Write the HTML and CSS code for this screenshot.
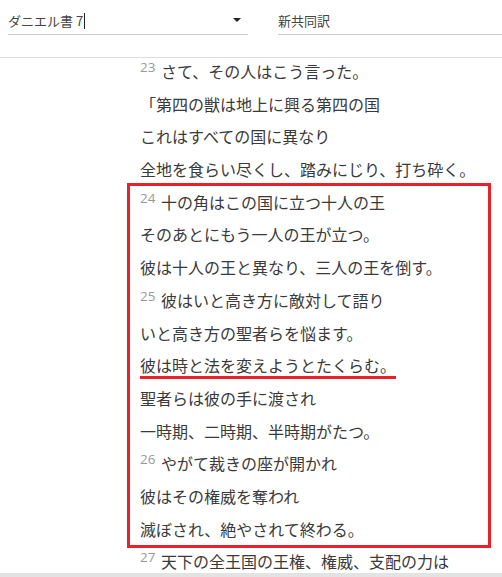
FILE: index.html
```html
<!DOCTYPE html>
<html lang="ja">
<head>
    <meta charset="UTF-8">
    <meta name="viewport" content="width=device-width, initial-scale=1.0">
    <title>ダニエル書 7 | 新共同訳</title>
    <link rel="stylesheet" href="styles.css">
</head>
<body>
    <header class="toolbar">
        <div class="field book-field">
            <span class="field-value">ダニエル書 7<span class="caret"></span></span>
            <span class="arrow"></span>
        </div>
        <div class="field version-field">
            <span class="field-value">新共同訳</span>
        </div>
    </header>

    <main class="reader">
        <div class="passage">
            <p class="line"><sup class="vnum">23</sup> さて、その人はこう言った。</p>
            <p class="line">「第四の獣は地上に興る第四の国</p>
            <p class="line">これはすべての国に異なり</p>
            <p class="line">全地を食らい尽くし、踏みにじり、打ち砕く。</p>
            <div class="highlight">
                <p class="line"><sup class="vnum">24</sup> 十の角はこの国に立つ十人の王</p>
                <p class="line">そのあとにもう一人の王が立つ。</p>
                <p class="line">彼は十人の王と異なり、三人の王を倒す。</p>
                <p class="line"><sup class="vnum">25</sup> 彼はいと高き方に敵対して語り</p>
                <p class="line">いと高き方の聖者らを悩ます。</p>
                <p class="line"><span class="underline">彼は時と法を変えようとたくらむ。</span></p>
                <p class="line">聖者らは彼の手に渡され</p>
                <p class="line">一時期、二時期、半時期がたつ。</p>
                <p class="line"><sup class="vnum">26</sup> やがて裁きの座が開かれ</p>
                <p class="line">彼はその権威を奪われ</p>
                <p class="line">滅ぼされ、絶やされて終わる。</p>
            </div>
            <p class="line"><sup class="vnum">27</sup> 天下の全王国の王権、権威、支配の力は</p>
        </div>
    </main>

    <div class="bottom-bar"></div>
</body>
</html>
```

FILE: styles.css
```css
body {
    margin: 0;
    font-family: "Noto Sans CJK JP", "Noto Sans", sans-serif;
    color: #333;
    background: #fff;
    overflow: hidden;
    height: 577px;
}
.toolbar {
    display: flex;
    gap: 30px;
    padding-left: 8px;
    height: 57px;
    border-bottom: 1px solid #ddd;
}
.field {
    display: flex;
    align-items: center;
    box-sizing: border-box;
    height: 35px;
    padding-top: 6px;
    border-bottom: 1px solid #ccc;
    font-size: 13px;
    color: #444;
}
.book-field {
    width: 240px;
    justify-content: space-between;
    padding-right: 7px;
}
.version-field {
    flex: 1;
}
.caret {
    display: inline-block;
    width: 1px;
    height: 16px;
    background: #222;
    vertical-align: -3px;
    margin-left: 1px;
}
.arrow {
    width: 0;
    height: 0;
    border-left: 4px solid transparent;
    border-right: 4px solid transparent;
    border-top: 4px solid #222;
}
.reader {
    height: 515px;
    overflow: hidden;
}
.passage {
    padding-left: 140px;
    margin-top: -3px;
}
.line {
    margin: 0;
    font-size: 16px;
    line-height: 32.7px;
    height: 32.7px;
    color: #3a3a3a;
    white-space: nowrap;
}
.vnum {
    font-family: "Open Sans", "Noto Sans", sans-serif;
    font-size: 13.5px;
    color: #999;
    vertical-align: 6px;
    line-height: 0;
    margin-right: 2px;
}
.highlight {
    border: 3px solid #e8212b;
    margin: -3px 11px -3px -13px;
    padding-left: 10px;
}
.underline {
    text-decoration: underline;
    text-decoration-color: #e8212b;
    text-decoration-thickness: 3px;
    text-underline-offset: 4px;
}
.bottom-bar {
    height: 4px;
    background: #e3e3e3;
}
```
